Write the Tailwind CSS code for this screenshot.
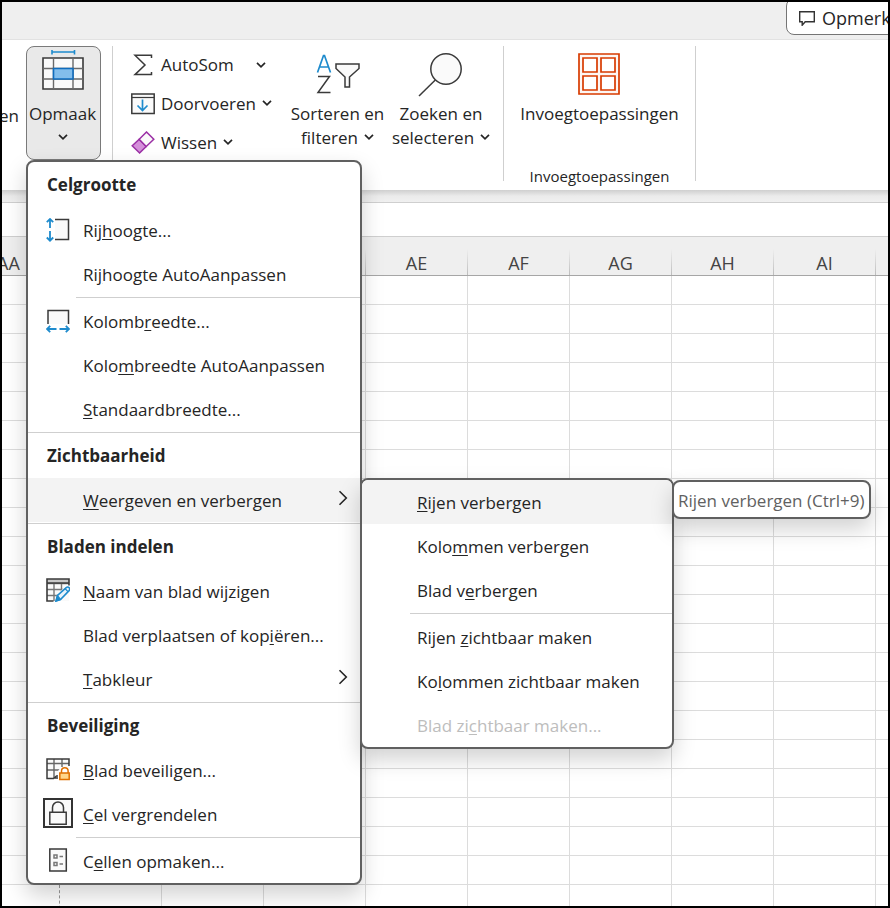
<!DOCTYPE html>
<html lang="nl">
<head>
<meta charset="utf-8">
<meta name="viewport" content="width=device-width, initial-scale=1">
<title>Opmaak – Celgrootte</title>
<script src="https://cdn.jsdelivr.net/npm/@tailwindcss/browser@4"></script>
</head>
<body class="font-['Open_Sans','Noto_Sans',sans-serif] text-[17px] leading-6 text-[#252525]">
<div class="flex h-screen flex-col overflow-hidden border-2 border-black bg-white">

  <!-- Title strip -->
  <header class="flex h-[38px] shrink-0 justify-end border-b border-[#e2e2e2] bg-[#efefef]">
    <div class="h-[33px] w-[102px] overflow-hidden">
      <button type="button" class="-mt-1 flex h-[37px] w-[150px] items-center gap-[7px] rounded-lg border border-[#757575] bg-white pl-3 pt-0.5 text-[18px]">
        <svg class="size-4 shrink-0" viewBox="0 0 16 16" fill="none" stroke="#333" stroke-width="1.4"><path d="M.7 1.7h14.6v10H6.2L3.2 15.2v-3.5H.7z"/></svg>
        Opmerkingen
      </button>
    </div>
  </header>

  <!-- Ribbon -->
  <nav class="relative z-10 flex h-[150px] shrink-0 bg-white pt-1.5" aria-label="Lint">
    <button type="button" class="flex h-[114px] w-6 items-start justify-end overflow-hidden pr-[7px] pt-[58px]">en</button>
    <div class="relative h-[114px] w-[75px] shrink-0">
      <button type="button" aria-haspopup="true" aria-expanded="true" class="flex h-full w-full flex-col items-center rounded-lg border border-[#7a7a7a] bg-[#e9e9e9] pr-0.5 pt-[3px]">
        <svg class="h-[42px] w-[46px] shrink-0" viewBox="0 0 46 42" fill="none">
          <path d="M12 0v4.600M34.500 0v4.600M12 2H34.500" stroke="#1e8bcd" stroke-width="1.600"/>
          <path d="M3 8h40v31H3z" fill="#fafafa" stroke="#3a3a3a" stroke-width="1.600"/>
          <path d="M13.500 8v31M33 8v31M3 18.500h40M3 29h40" stroke="#6a6a6a" stroke-width="1.400"/>
          <path d="M13.500 18.500H33V29H13.500z" fill="#83beec" stroke="#0f6cbd" stroke-width="1.600"/>
        </svg>
        <span class="mt-2.5">Opmaak</span>
        <svg class="mt-2 h-1.5 w-2.5 shrink-0" viewBox="0 0 10 6" fill="none" stroke="#252525" stroke-width="1.700"><path d="M1 .8l4 4 4-4"/></svg>
      </button>

      <!-- Format menu -->
      <div role="menu" class="absolute left-0 top-full w-[336px] rounded-lg border-2 border-[#606060] bg-white shadow-[0_10px_22px_rgba(0,0,0,0.18)]">
        <h2 class="flex h-[46px] items-center pl-[19px] font-bold">Celgrootte</h2>
        <button type="button" role="menuitem" class="flex h-11 w-full items-center gap-[13px] pl-[18px]">
          <svg class="size-6 shrink-0" viewBox="0 0 24 24" fill="none"><path d="M9 1.500h13.500v20H9" fill="#fafafa" stroke="#3a3a3a" stroke-width="1.500"/><path d="M4 10V1M.8 4.200L4 1l3.200 3.200M4 13v9.500M.8 19.500L4 22.700l3.200-3.200" stroke="#1e8bcd" stroke-width="1.800"/></svg>
          <span class="pt-0.5">Rij<u class="underline-offset-2">h</u>oogte...</span>
        </button>
        <button type="button" role="menuitem" class="flex h-11 w-full items-center pl-[55px]"><span class="pt-0.5">Ri<u class="underline-offset-2">j</u>hoogte AutoAanpassen</span></button>
        <hr class="my-px ml-12 border-[#cfcfcf]">
        <button type="button" role="menuitem" class="flex h-11 w-full items-center gap-[13px] pl-[18px]">
          <svg class="size-6 shrink-0" viewBox="0 0 24 24" fill="none"><path d="M2 15V1.500h20.500V15" fill="#fafafa" stroke="#3a3a3a" stroke-width="1.500"/><path d="M10.500 20H1M4.200 16.800L1 20l3.200 3.200M13.500 20H23M19.800 16.800L23 20l-3.200 3.200" stroke="#1e8bcd" stroke-width="1.800"/></svg>
          <span class="pt-0.5">Kolomb<u class="underline-offset-2">r</u>eedte...</span>
        </button>
        <button type="button" role="menuitem" class="flex h-11 w-full items-center pl-[55px]"><span class="pt-0.5">Kolo<u class="underline-offset-2">m</u>breedte AutoAanpassen</span></button>
        <button type="button" role="menuitem" class="flex h-11 w-full items-center pl-[55px]"><span class="pt-0.5"><u class="underline-offset-2">S</u>tandaardbreedte...</span></button>
        <hr class="my-px border-[#cfcfcf]">
        <h2 class="flex h-11 items-center pl-[19px] font-bold">Zichtbaarheid</h2>
        <div class="relative">
          <button type="button" role="menuitem" aria-haspopup="true" aria-expanded="true" class="flex h-11 w-full items-center justify-between bg-[#f3f3f3] pl-[55px] pr-3">
            <span class="pt-0.5"><u class="underline-offset-2">W</u>eergeven en verbergen</span>
            <svg class="mb-1 h-4 w-2.5" viewBox="0 0 10 16" fill="none" stroke="#252525" stroke-width="1.600"><path d="M1.500 1.200L8.300 8l-6.800 6.800"/></svg>
          </button>

          <!-- Show/hide submenu -->
          <div role="menu" class="absolute left-full top-0 z-10 w-[314px] rounded-lg border-2 border-[#606060] bg-white shadow-[0_10px_22px_rgba(0,0,0,0.18)]">
            <div class="relative">
              <button type="button" role="menuitem" class="flex h-11 w-full items-center rounded-t-md bg-[#f3f3f3] pl-[55px]"><span class="pt-0.5"><u class="underline-offset-2">R</u>ijen verbergen</span></button>
              <div role="tooltip" class="absolute left-full top-0 flex h-[39px] w-[199px] items-center whitespace-nowrap rounded-lg border-2 border-[#606060] bg-white pl-1 pt-0.5 text-[#616161] shadow-[0_10px_22px_rgba(0,0,0,0.18)]">Rijen verbergen (Ctrl+9)</div>
            </div>
            <button type="button" role="menuitem" class="flex h-11 w-full items-center pl-[55px]"><span class="pt-0.5">Kolo<u class="underline-offset-2">m</u>men verbergen</span></button>
            <button type="button" role="menuitem" class="flex h-11 w-full items-center pl-[55px]"><span class="pt-0.5">Blad v<u class="underline-offset-2">e</u>rbergen</span></button>
            <hr class="my-px ml-12 border-[#cfcfcf]">
            <button type="button" role="menuitem" class="flex h-11 w-full items-center pl-[55px]"><span class="pt-0.5">Rijen <u class="underline-offset-2">z</u>ichtbaar maken</span></button>
            <button type="button" role="menuitem" class="flex h-11 w-full items-center pl-[55px]"><span class="pt-0.5">Ko<u class="underline-offset-2">l</u>ommen zichtbaar maken</span></button>
            <button type="button" role="menuitem" disabled class="flex h-11 w-full items-center pl-[55px] text-[#bdbdbd]"><span class="pt-0.5">Blad zi<u class="underline-offset-2">c</u>htbaar maken...</span></button>
          </div>
        </div>
        <hr class="my-px border-[#cfcfcf]">
        <h2 class="flex h-11 items-center pl-[19px] font-bold">Bladen indelen</h2>
        <button type="button" role="menuitem" class="flex h-11 w-full items-center gap-[13px] pl-[18px]">
          <svg class="mb-0.5 size-6 shrink-0" viewBox="0 0 24 24" fill="none"><path d="M1 1h22v22H1z" fill="#fafafa"/><path d="M1 5.500h22M1 11.500h17M1 17.500h10M8 5v18M15.500 5v8" stroke="#777" stroke-width="1.400"/><path d="M1 1h22v4H1z" fill="#c8c8c8"/><path d="M7.500 23H1V1h22v7M1 5h22" stroke="#3a3a3a" stroke-width="1.600"/><path d="M9 25l2-8L20 7.500h5V12L13 24.500z" fill="#fff"/><path d="M10 23l1.500-5.500 8.700-7.900c1-.9 2.300-.7 3 .1.700.8.700 2-.1 2.900L14.500 21.500z" fill="#e8f3fb" stroke="#1e8bcd" stroke-width="1.600"/><path d="M10 23l1.500-5.500 3 4zM19 10.500l3.200 3.300" fill="#1e8bcd" stroke="#1e8bcd" stroke-width="1.200"/></svg>
          <span class="pt-0.5"><u class="underline-offset-2">N</u>aam van blad wijzigen</span>
        </button>
        <button type="button" role="menuitem" class="flex h-11 w-full items-center pl-[55px]"><span class="pt-0.5">Blad verplaatsen of kop<u class="underline-offset-2">i</u>ëren...</span></button>
        <button type="button" role="menuitem" aria-haspopup="true" class="flex h-11 w-full items-center justify-between pl-[55px] pr-3">
          <span class="pt-0.5"><u class="underline-offset-2">T</u>abkleur</span>
          <svg class="mb-1 h-4 w-2.5" viewBox="0 0 10 16" fill="none" stroke="#252525" stroke-width="1.600"><path d="M1.500 1.200L8.300 8l-6.800 6.800"/></svg>
        </button>
        <hr class="my-px border-[#cfcfcf]">
        <h2 class="flex h-11 items-center pl-[19px] font-bold">Beveiliging</h2>
        <button type="button" role="menuitem" class="flex h-11 w-full items-center gap-[13px] pl-[18px]">
          <svg class="mb-0.5 size-6 shrink-0" viewBox="0 0 24 24" fill="none"><path d="M1 2h22v17H10l-2 2H1z" fill="#fafafa"/><path d="M1 6.500h22M1 13h14M8 2v19M16 2v9" stroke="#666" stroke-width="1.400"/><path d="M12 21H8.500M23 9V2H1v19.500h6.500l3-2.500H12" stroke="#3a3a3a" stroke-width="1.500"/><path d="M12 25V14l3-4h7l3 4v11z" fill="#fff"/><path d="M15.500 16v-2a3.300 3.300 0 0 1 6.600 0v2" stroke="#e07000" stroke-width="1.500"/><path d="M13.800 16h9.400v6.500h-9.400z" fill="#ffd68a" stroke="#e07000" stroke-width="1.500"/></svg>
          <span class="pt-0.5"><u class="underline-offset-2">B</u>lad beveiligen...</span>
        </button>
        <button type="button" role="menuitemcheckbox" aria-checked="true" class="flex h-11 w-full items-center gap-2.5 pl-[15px]">
          <svg class="mb-0.5 h-[30px] w-[30px] shrink-0" viewBox="0 0 30 30" fill="none"><path d="M1 1h28v28H1z" fill="#fafafa" stroke="#333" stroke-width="2"/><path d="M9.500 14V9.500a5.500 5.500 0 0 1 11 0V14M6.800 14.300h16.400v12H6.800z" stroke="#3a3a3a" stroke-width="1.500"/></svg>
          <span class="pt-0.5"><u class="underline-offset-2">C</u>el vergrendelen</span>
        </button>
        <hr class="my-px ml-12 border-[#cfcfcf]">
        <button type="button" role="menuitem" class="flex h-11 w-full items-center gap-[13px] pl-[18px]">
          <svg class="mb-0.5 size-6 shrink-0" viewBox="0 0 24 24" fill="none"><path d="M3.800 1h16.500v22H3.800z" fill="#fafafa" stroke="#3a3a3a" stroke-width="1.500"/><path d="M8 7h3v3H8zM8 14.500h3v3H8zM13.500 8.500H17M13.500 16H17" stroke="#777" stroke-width="1.500"/></svg>
          <span class="pt-0.5">C<u class="underline-offset-2">e</u>llen opmaken...</span>
        </button>
      </div>
    </div>

    <section class="ml-[11px] h-[135px] border-l border-[#cfcfcf] pl-[18px]">
      <div class="flex">
        <div class="-mt-px flex w-[150px] flex-col">
          <button type="button" class="flex h-[39px] items-center">
            <svg class="mr-[6px] size-6 shrink-0" viewBox="0 0 24 24" fill="none" stroke="#3a3a3a" stroke-width="1.500"><path d="M20.500 5V2.300H4L14 12 4 21.600h16.500V19"/></svg>
            AutoSom
            <svg class="ml-[22px] h-1.5 w-2.5" viewBox="0 0 10 6" fill="none" stroke="#252525" stroke-width="1.700"><path d="M1 .8l4 4 4-4"/></svg>
          </button>
          <button type="button" class="flex h-[39px] items-center">
            <svg class="mr-[6px] size-6 shrink-0" viewBox="0 0 24 24" fill="none"><path d="M.8 2h22.400v19.500H.8z" fill="#fafafa" stroke="#3a3a3a" stroke-width="1.500"/><path d="M1 5.500h22" stroke="#3a3a3a" stroke-width="1.200"/><path d="M11.500 7.500v10.800M6.500 13.500l5 5 5-5" stroke="#1e8bcd" stroke-width="1.700"/></svg>
            Doorvoeren
            <svg class="mb-0.5 ml-[6px] h-1.5 w-2.5" viewBox="0 0 10 6" fill="none" stroke="#252525" stroke-width="1.700"><path d="M1 .8l4 4 4-4"/></svg>
          </button>
          <button type="button" class="flex h-[39px] items-center">
            <svg class="mr-[6px] size-6 shrink-0" viewBox="0 0 24 24" fill="none" stroke="#9b30a5" stroke-width="1.500"><path d="M1.200 14.800l7-6.500 7 7.200L8.600 22z" fill="#d48fda"/><path d="M8.200 8.300L15.500 1l7.300 7.300-7.600 7.200z" fill="#fafafa"/></svg>
            Wissen
            <svg class="mb-0.5 ml-[6px] h-1.5 w-2.5" viewBox="0 0 10 6" fill="none" stroke="#252525" stroke-width="1.700"><path d="M1 .8l4 4 4-4"/></svg>
          </button>
        </div>
        <button type="button" class="flex w-[113px] flex-col items-center pt-1">
          <svg class="h-12 w-[46px]" viewBox="0 0 46 48" fill="none"><path d="M2.500 22.500L8.500 5.500h1L15.500 22.500M4.600 17h8.800" stroke="#1e8bcd" stroke-width="1.700"/><path d="M3 26.500h11.500L3 42.500h12.500" stroke="#3a3a3a" stroke-width="1.500"/><path d="M21 14h23v4.500L34.500 27v10H30V27L21 18.500z" fill="#fafafa" stroke="#3a3a3a" stroke-width="1.500"/></svg>
          <span class="mt-1">Sorteren en</span>
          <span class="flex items-center gap-[6px]">filteren <svg class="mb-0.5 h-1.5 w-2.5" viewBox="0 0 10 6" fill="none" stroke="#252525" stroke-width="1.700"><path d="M1 .8l4 4 4-4"/></svg></span>
        </button>
        <button type="button" class="flex w-[94px] flex-col items-center pt-1">
          <svg class="h-12 w-[46px]" viewBox="0 0 46 48" fill="none" stroke="#3a3a3a" stroke-width="1.500"><circle cx="28" cy="19" r="15.200" fill="#fafafa"/><path d="M17.300 30L1 46"/></svg>
          <span class="mt-1">Zoeken en</span>
          <span class="flex items-center gap-[6px]">selecteren <svg class="mb-0.5 h-1.5 w-2.5" viewBox="0 0 10 6" fill="none" stroke="#252525" stroke-width="1.700"><path d="M1 .8l4 4 4-4"/></svg></span>
        </button>
      </div>
    </section>
    <section class="ml-[15px] flex h-[135px] w-[193px] flex-col items-center border-x border-[#cfcfcf]">
      <button type="button" class="flex flex-col items-center pt-1.5">
        <svg class="size-[44px]" viewBox="0 0 44 44" fill="none" stroke="#d83b01" stroke-width="1.700"><path d="M2 2h40v40H2z" fill="#fdf6f3"/><path d="M6 6h14v14H6zM24 6h14v14H24zM6 24h14v14H6zM24 24h14v14H24z" fill="#fff"/></svg>
        <span class="mt-[6px]">Invoegtoepassingen</span>
      </button>
      <span class="mt-10 text-[15px] leading-5">Invoegtoepassingen</span>
    </section>
  </nav>

  <!-- Formula bar -->
  <div class="h-3 shrink-0 bg-linear-to-b from-[#cfcfcf] via-[#ebebeb] to-[#f0f0f0]"></div>
  <div class="h-[35px] shrink-0 border-y border-[#cfcfcf] bg-white"></div>

  <!-- Worksheet -->
  <main class="min-h-0 flex-1 overflow-hidden">
    <table class="-ml-11 w-[1020px] table-fixed border-separate border-spacing-0">
      <thead><tr id="columns"></tr></thead>
      <tbody id="rows"></tbody>
    </table>
  </main>
</div>
<script>
  // Columns under the open menu carry no label.
  const names = ['AA', '', '', '', 'AE', 'AF', 'AG', 'AH', 'AI', ''];
  document.getElementById('columns').innerHTML = names.map(n =>
    `<th scope="col" class="h-[39px] border-b border-[#a6a6a6] bg-[#efefef] p-0 align-bottom text-[18px] font-normal text-[#444]"><div class="flex h-[26px] items-center justify-center"><span class="flex-1 pt-0.5 text-center">${n}</span><i class="h-full w-px bg-linear-to-b from-[#efefef] to-[#bdbdbd]"></i></div></th>`).join('');
  // The first column ends on a page break, drawn dashed.
  const row = '<tr>' + names.map((n, i) => i === 0
    ? '<td class="h-[29px] border-b border-r border-b-[#dcdcdc] border-r-[#999] p-0 [border-right-style:dashed]"></td>'
    : '<td class="h-[29px] border-b border-r border-[#dcdcdc] p-0"></td>').join('') + '</tr>';
  document.getElementById('rows').innerHTML = row.repeat(60);
</script>
</body>
</html>
